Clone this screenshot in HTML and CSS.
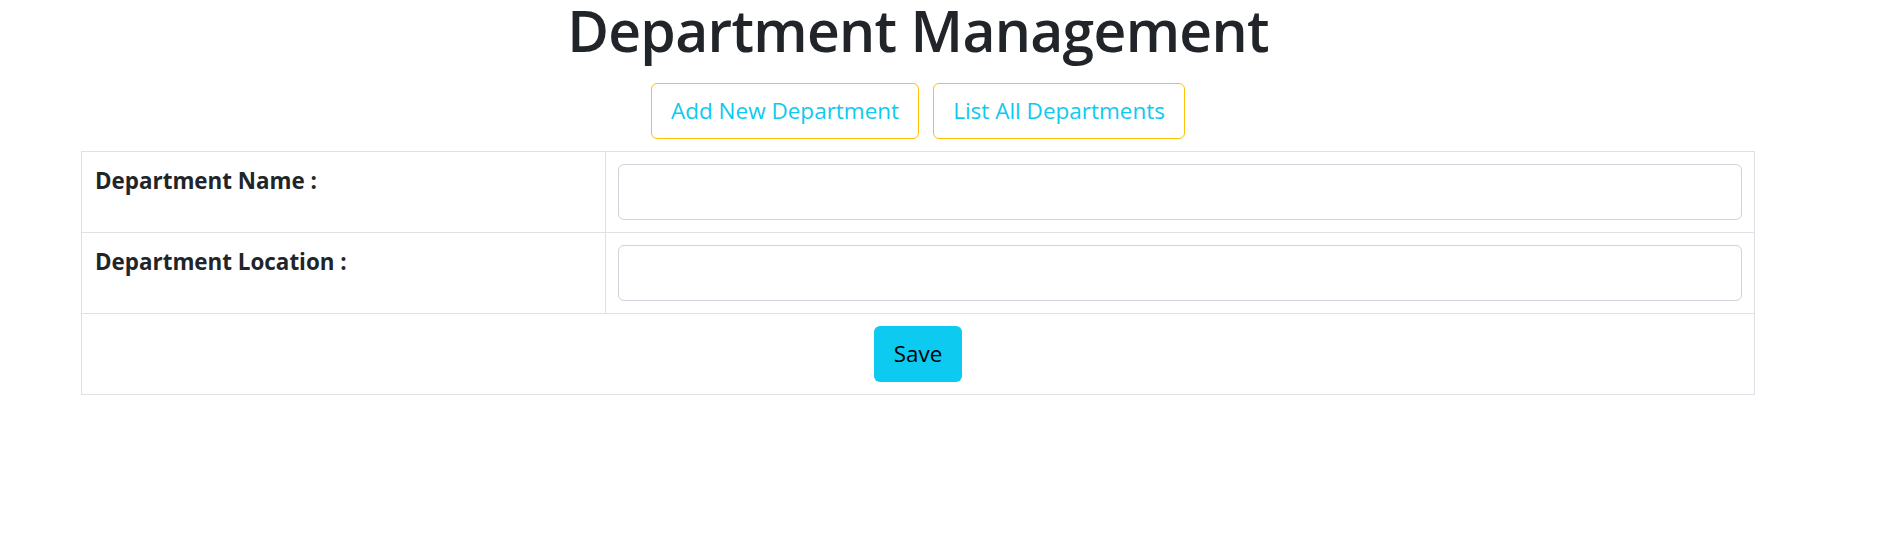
FILE: index.html
```html
<!DOCTYPE html>
<html lang="en">
<head>
<meta charset="utf-8">
<title>Department Management</title>
<link rel="stylesheet" href="styles.css">
</head>
<body>
<div class="page">
  <h1 class="title">Department Management</h1>
  <div class="actions">
    <button class="btn-outline" type="button">Add New Department</button>
    <button class="btn-outline" type="button">List All Departments</button>
  </div>
  <form class="dept-form">
    <div class="cell label-cell"><label for="dname">Department Name :</label></div>
    <div class="cell input-cell"><input id="dname" class="field" type="text"></div>
    <div class="cell label-cell"><label for="dloc">Department Location :</label></div>
    <div class="cell input-cell"><input id="dloc" class="field" type="text"></div>
    <div class="cell save-cell"><button class="btn-save" type="submit">Save</button></div>
  </form>
</div>
</body>
</html>
```
FILE: styles.css
```css
* { box-sizing: border-box; }
body {
  margin: 0;
  background: #fff;
  font-family: "Open Sans", "Noto Sans", sans-serif;
  color: #212529;
}
.page {
  margin-left: 81px;
  width: 1674px;
}
.title {
  margin: 0;
  text-align: center;
  font-size: 57px;
  line-height: 61px;
  font-weight: 600;
  letter-spacing: -0.7px;
  color: #212529;
}
.actions {
  display: flex;
  justify-content: center;
  gap: 14px;
  margin-top: 22px;
}
.btn-outline {
  height: 56px;
  padding: 0 19px;
  background: #fff;
  border: 1px solid #ffc107;
  border-radius: 6px;
  color: #0dcaf0;
  font-family: inherit;
  font-size: 22.5px;
  line-height: 1;
}
.dept-form {
  margin-top: 12px;
  display: grid;
  grid-template-columns: 523px 1fr;
  border: 1px solid #dee2e6;
}
.cell {
  padding: 12px;
  border-bottom: 1px solid #dee2e6;
}
.label-cell {
  padding: 12px 13px;
}
.label-cell label {
  font-weight: 700;
  font-size: 22.4px;
  line-height: 1.5;
}
.input-cell {
  border-left: 1px solid #dee2e6;
}
.field {
  display: block;
  width: 100%;
  height: 56px;
  border: 1px solid #ced4da;
  border-radius: 6px;
  background: #fff;
  font-family: inherit;
  font-size: 22.4px;
  padding: 0 16px;
}
.save-cell {
  grid-column: 1 / span 2;
  border-bottom: none;
  display: flex;
  justify-content: center;
}
.btn-save {
  height: 56px;
  padding: 0 20px;
  border: none;
  border-radius: 6px;
  background: #0dcaf0;
  color: #000;
  font-family: inherit;
  font-size: 22.4px;
  line-height: 1;
}
```
